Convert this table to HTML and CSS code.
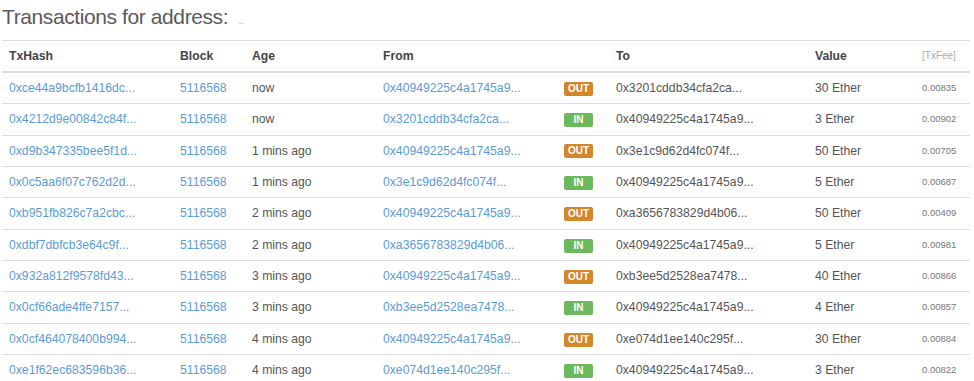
FILE: index.html
```html
<!DOCTYPE html>
<html>
  <head>
    <link rel="stylesheet" href="styles.css">
  </head>
  <body>
    <div class="page">
      <h2 class="title">Transactions for address: <span class="addr">..</span></h2>

      <table class="tx-table">
        <colgroup>
          <col style="width: 171px">
          <col style="width: 72px">
          <col style="width: 131px">
          <col style="width: 181px">
          <col style="width: 52px">
          <col style="width: 199px">
          <col style="width: 107px">
          <col style="width: 55px">
        </colgroup>
        <thead>
          <tr>
            <th>TxHash</th>
            <th>Block</th>
            <th>Age</th>
            <th>From</th>
            <th></th>
            <th>To</th>
            <th>Value</th>
            <th class="fee">[TxFee]</th>
          </tr>
        </thead>
        <tbody>
          <tr>
            <td><a href="#">0xce44a9bcfb1416dc...</a></td>
            <td><a href="#">5116568</a></td>
            <td>now</td>
            <td><a href="#">0x40949225c4a1745a9...</a></td>
            <td><span class="badge out">OUT</span></td>
            <td>0x3201cddb34cfa2ca...</td>
            <td>30 Ether</td>
            <td class="fee">0.00835</td>
          </tr>
          <tr>
            <td><a href="#">0x4212d9e00842c84f...</a></td>
            <td><a href="#">5116568</a></td>
            <td>now</td>
            <td><a href="#">0x3201cddb34cfa2ca...</a></td>
            <td><span class="badge in">IN</span></td>
            <td>0x40949225c4a1745a9...</td>
            <td>3 Ether</td>
            <td class="fee">0.00902</td>
          </tr>
          <tr>
            <td><a href="#">0xd9b347335bee5f1d...</a></td>
            <td><a href="#">5116568</a></td>
            <td>1 mins ago</td>
            <td><a href="#">0x40949225c4a1745a9...</a></td>
            <td><span class="badge out">OUT</span></td>
            <td>0x3e1c9d62d4fc074f...</td>
            <td>50 Ether</td>
            <td class="fee">0.00705</td>
          </tr>
          <tr>
            <td><a href="#">0x0c5aa6f07c762d2d...</a></td>
            <td><a href="#">5116568</a></td>
            <td>1 mins ago</td>
            <td><a href="#">0x3e1c9d62d4fc074f...</a></td>
            <td><span class="badge in">IN</span></td>
            <td>0x40949225c4a1745a9...</td>
            <td>5 Ether</td>
            <td class="fee">0.00687</td>
          </tr>
          <tr>
            <td><a href="#">0xb951fb826c7a2cbc...</a></td>
            <td><a href="#">5116568</a></td>
            <td>2 mins ago</td>
            <td><a href="#">0x40949225c4a1745a9...</a></td>
            <td><span class="badge out">OUT</span></td>
            <td>0xa3656783829d4b06...</td>
            <td>50 Ether</td>
            <td class="fee">0.00409</td>
          </tr>
          <tr>
            <td><a href="#">0xdbf7dbfcb3e64c9f...</a></td>
            <td><a href="#">5116568</a></td>
            <td>2 mins ago</td>
            <td><a href="#">0xa3656783829d4b06...</a></td>
            <td><span class="badge in">IN</span></td>
            <td>0x40949225c4a1745a9...</td>
            <td>5 Ether</td>
            <td class="fee">0.00981</td>
          </tr>
          <tr>
            <td><a href="#">0x932a812f9578fd43...</a></td>
            <td><a href="#">5116568</a></td>
            <td>3 mins ago</td>
            <td><a href="#">0x40949225c4a1745a9...</a></td>
            <td><span class="badge out">OUT</span></td>
            <td>0xb3ee5d2528ea7478...</td>
            <td>40 Ether</td>
            <td class="fee">0.00866</td>
          </tr>
          <tr>
            <td><a href="#">0x0cf66ade4ffe7157...</a></td>
            <td><a href="#">5116568</a></td>
            <td>3 mins ago</td>
            <td><a href="#">0xb3ee5d2528ea7478...</a></td>
            <td><span class="badge in">IN</span></td>
            <td>0x40949225c4a1745a9...</td>
            <td>4 Ether</td>
            <td class="fee">0.00857</td>
          </tr>
          <tr>
            <td><a href="#">0x0cf464078400b994...</a></td>
            <td><a href="#">5116568</a></td>
            <td>4 mins ago</td>
            <td><a href="#">0x40949225c4a1745a9...</a></td>
            <td><span class="badge out">OUT</span></td>
            <td>0xe074d1ee140c295f...</td>
            <td>30 Ether</td>
            <td class="fee">0.00884</td>
          </tr>
          <tr>
            <td><a href="#">0xe1f62ec683596b36...</a></td>
            <td><a href="#">5116568</a></td>
            <td>4 mins ago</td>
            <td><a href="#">0xe074d1ee140c295f...</a></td>
            <td><span class="badge in">IN</span></td>
            <td>0x40949225c4a1745a9...</td>
            <td>3 Ether</td>
            <td class="fee">0.00822</td>
          </tr>
        </tbody>
      </table>
    </div>
  </body>
</html>
```

FILE: styles.css
```css
body {
  font-family: "Liberation Sans", Arial, sans-serif;
  margin: 0;
  padding: 0;
  background-color: white;
  color: #555;
}

.page {
  padding: 0 4px 0 2px;
}

.title {
  margin: 0 0 3px 0;
  padding-top: 1px;
  font-size: 21px;
  line-height: 32px;
  font-weight: normal;
  letter-spacing: -0.4px;
  color: #5a5a5a;
}

.title .addr {
  font-size: 10px;
  letter-spacing: 0;
  color: #aaa;
  margin-left: 5px;
}

.tx-table {
  width: 968px;
  table-layout: fixed;
  border-collapse: separate;
  border-spacing: 0;
  font-size: 12.2px;
}

.tx-table th {
  text-align: left;
  font-weight: bold;
  color: #444;
  padding: 7px;
  line-height: 16px;
  border-top: 1px solid #ddd;
  border-bottom: 2px solid #ddd;
  white-space: nowrap;
}

.tx-table td {
  padding: 7px;
  line-height: 16.34px;
  border-bottom: 1px solid #ddd;
  white-space: nowrap;
  overflow: hidden;
}

.tx-table a {
  color: #5b9bd9;
  text-decoration: none;
}

.tx-table th.fee {
  font-size: 10px;
  font-weight: normal;
  color: #aaa;
}

.tx-table td.fee {
  font-size: 9.5px;
  color: #777;
}

.badge {
  display: inline-block;
  width: 29px;
  height: 14px;
  line-height: 14px;
  text-align: center;
  font-size: 10px;
  font-weight: bold;
  color: white;
  border-radius: 2px;
  vertical-align: middle;
}

.badge.out {
  background-color: #d4862b;
}

.badge.in {
  background-color: #6cb85c;
}
```
